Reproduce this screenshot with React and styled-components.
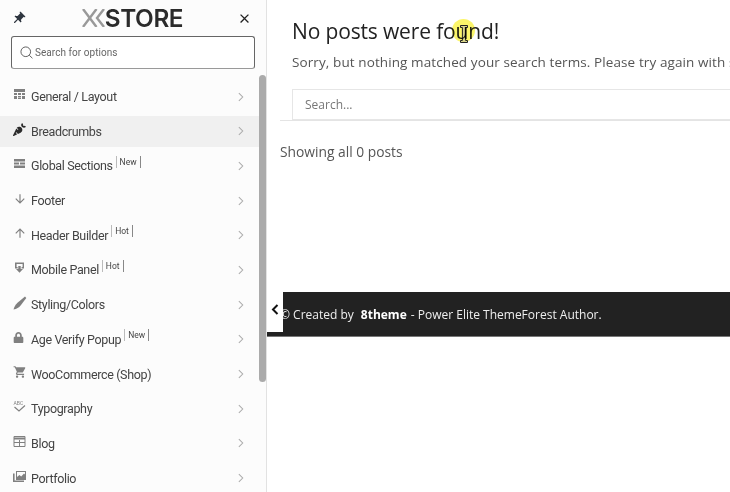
import React from 'react';
import styled, { createGlobalStyle } from 'styled-components';
import { FaCarrot, FaLock } from 'react-icons/fa';
import {
  MdArrowDownward,
  MdArrowUpward,
  MdClose,
  MdPushPin,
  MdShoppingCart,
} from 'react-icons/md';

const GridIcon = () => (
  <svg width="13" height="13" viewBox="0 0 13 13" fill="currentColor">
    <path d="M1 1h11v3H1zM1 5h3v2H1zM5 5h3v2H5zM9 5h3v2H9zM1 8h3v3H1zM5 8h3v1.4H5zM5 10h3v1H5zM9 8h3v3H9z" />
  </svg>
);

const SectionsIcon = () => (
  <svg width="13" height="13" viewBox="0 0 13 13" fill="currentColor">
    <path d="M1 2h11v2.4H1zM1 5.4h5v2.2H1zM7 5.4h5v2.2H7zM1 8.6h11V11H1z" />
  </svg>
);

const MobileIcon = () => (
  <svg width="13" height="13" viewBox="0 0 13 13" fill="currentColor">
    <path d="M2 1.5h9v6H8.6V6h1V3h-6v3h1v1.5H2zM5.3 5h2.4v3H10l-3.5 3.8L3 8h2.3z" />
  </svg>
);

const BrushIcon = () => (
  <svg width="14" height="14" viewBox="0 0 14 14" fill="currentColor">
    <path d="M0.5 13.5c.8-3 2-5 4-6.8L12 .6l1.3 1.3L7.6 9.4c-1.6 2.1-3.9 3.4-7.1 4.1z" />
  </svg>
);

const TypographyIcon = () => (
  <svg width="13" height="13" viewBox="0 0 13 13">
    <text x="0.5" y="4.6" fontSize="5" fontFamily="Roboto, sans-serif" fill="currentColor">
      ABC
    </text>
    <path d="M1.5 7l4.5 4 6-5.5" fill="none" stroke="currentColor" strokeWidth="1.2" />
  </svg>
);

const TableIcon = () => (
  <svg width="13" height="13" viewBox="0 0 13 13" fill="none" stroke="currentColor">
    <path d="M1 1.5h11v10H1z" />
    <path d="M1 3.5h11" strokeWidth="2" />
    <path d="M1 7.5h11M6.5 5v6.5" />
  </svg>
);

const PortfolioIcon = () => (
  <svg width="13" height="13" viewBox="0 0 13 13" fill="currentColor">
    <path d="M3 1h10v9H3zM4 2v5l2.4-2 1.8 1.4L11 3.4l1 1V2z" fillRule="evenodd" />
    <path d="M0 3.4h1.6v7.2H11V12H0z" />
  </svg>
);

const menuItems = [
  { label: 'General / Layout', icon: <GridIcon /> },
  { label: 'Breadcrumbs', icon: <FaCarrot size={13} />, active: true, dark: true },
  { label: 'Global Sections', icon: <SectionsIcon />, tag: 'New' },
  { label: 'Footer', icon: <MdArrowDownward size={14} /> },
  { label: 'Header Builder', icon: <MdArrowUpward size={14} />, tag: 'Hot' },
  { label: 'Mobile Panel', icon: <MobileIcon />, tag: 'Hot' },
  { label: 'Styling/Colors', icon: <BrushIcon /> },
  { label: 'Age Verify Popup', icon: <FaLock size={11} />, tag: 'New' },
  { label: 'WooCommerce (Shop)', icon: <MdShoppingCart size={14} /> },
  { label: 'Typography', icon: <TypographyIcon /> },
  { label: 'Blog', icon: <TableIcon /> },
  { label: 'Portfolio', icon: <PortfolioIcon /> },
];

const App = () => {
  return (
    <>
      <GlobalStyle />
      <Page>
        <Sidebar>
          <Header>
            <PinButton>
              <MdPushPin size={15} />
            </PinButton>
            <Logo>
              <svg width="23" height="18" viewBox="0 0 23 18" fill="none" stroke="#999" strokeWidth="2.4">
                <path d="M1 0l13.5 18M14.5 0L1 18M22 0l-7 9 7 9" />
              </svg>
              <LogoText>STORE</LogoText>
            </Logo>
            <CloseButton>
              <MdClose size={15} />
            </CloseButton>
          </Header>
          <SearchBox>
            <svg width="13" height="13" viewBox="0 0 14 14" fill="none" stroke="#444" strokeWidth="0.9">
              <circle cx="6.2" cy="6.2" r="5.2" />
              <path d="M10 10l3.4 3.2" />
            </svg>
            <SearchText>Search for options</SearchText>
          </SearchBox>
          <Menu>
            {menuItems.map((item) => (
              <MenuRow key={item.label} $active={item.active}>
                <IconSlot $dark={item.dark}>{item.icon}</IconSlot>
                <MenuLabel>{item.label}</MenuLabel>
                {item.tag && <Tag>{item.tag}</Tag>}
                <Arrow viewBox="0 0 7 11">
                  <path d="M1 1l4.5 4.5L1 10" />
                </Arrow>
              </MenuRow>
            ))}
          </Menu>
          <ScrollThumb />
        </Sidebar>
        <Main>
          <Notice>
            <Title>No posts were found!</Title>
            <Message>
              Sorry, but nothing matched your search terms. Please try again with some different keywords.
            </Message>
            <SearchField>Search...</SearchField>
          </Notice>
          <Results>Showing all 0 posts</Results>
          <FooterBar>
            <CollapseTab>
              <svg width="8" height="11" viewBox="0 0 8 11" fill="none" stroke="#111" strokeWidth="2">
                <path d="M6.5 1L2 5.5 6.5 10" />
              </svg>
            </CollapseTab>
            <span>© Created by</span>
            <strong>8theme</strong>
            <span>- Power Elite ThemeForest Author.</span>
          </FooterBar>
          <CursorMark>
            <svg width="8" height="18" viewBox="0 0 8 18" fill="#d8d48a" stroke="#222" strokeWidth="1">
              <path d="M.5.5h7v2H5.6v13h1.9v2h-7v-2h1.9v-13H.5z" />
            </svg>
          </CursorMark>
        </Main>
      </Page>
    </>
  );
};

export default App;

const GlobalStyle = createGlobalStyle`
  html, body {
    margin: 0;
    background: #fff;
  }
`;

const Page = styled.div`
  width: 730px;
  height: 492px;
  display: flex;
  overflow: hidden;
`;

const Sidebar = styled.aside`
  position: relative;
  flex: 0 0 266px;
  height: 492px;
  background: #fcfcfc;
  border-right: 1px solid #e2e2e2;
  font-family: Roboto, sans-serif;
  overflow: hidden;
`;

const Header = styled.div`
  height: 36px;
  display: flex;
  align-items: center;
  justify-content: space-between;
  padding: 0 14px 0 11px;
`;

const PinButton = styled.span`
  display: flex;
  color: #2f3640;
  transform: rotate(45deg);
`;

const CloseButton = styled.span`
  display: flex;
  color: #222;
`;

const Logo = styled.div`
  display: flex;
  align-items: center;
  margin-left: 2px;
`;

const LogoText = styled.span`
  font-family: Inter, sans-serif;
  font-size: 24.3px;
  font-weight: 600;
  line-height: 26px;
  letter-spacing: -0.4px;
  color: #2b2b2b;
`;

const SearchBox = styled.div`
  box-sizing: border-box;
  width: 244px;
  height: 33px;
  margin-left: 11px;
  padding-left: 8px;
  display: flex;
  align-items: center;
  gap: 2px;
  background: #fff;
  border: 1px solid #666;
  border-bottom-color: #999;
  border-radius: 3px;
`;

const SearchText = styled.span`
  font-size: 10px;
  letter-spacing: 0.05px;
  color: #666;
`;

const Menu = styled.div`
  margin-top: 12px;
`;

const MenuRow = styled.div`
  box-sizing: border-box;
  width: 259px;
  height: 31px;
  margin-bottom: 3.7px;
  padding: 0 14px 0 13px;
  display: flex;
  align-items: center;
  background: ${(props) => (props.$active ? '#f0f0f0' : 'transparent')};
`;

const IconSlot = styled.span`
  flex: 0 0 18px;
  height: 14px;
  display: flex;
  align-items: center;
  margin-top: -4px;
  color: ${(props) => (props.$dark ? '#2b2b2b' : '#808080')};
`;

const MenuLabel = styled.span`
  font-size: 12.5px;
  letter-spacing: -0.35px;
  color: #444;
`;

const Tag = styled.span`
  margin: -8px 0 0 3px;
  padding: 0 3px;
  font-size: 8.5px;
  line-height: 12px;
  color: #444;
  border-left: 1px solid #bbb;
  border-right: 1px solid #888;
`;

const Arrow = styled.svg`
  width: 6px;
  height: 10px;
  margin-left: auto;
  margin-right: 1px;
  fill: none;
  stroke: #aaa;
  stroke-width: 1.2;
`;

const ScrollThumb = styled.div`
  position: absolute;
  top: 75px;
  right: 0;
  width: 7px;
  height: 307px;
  border-radius: 4px;
  background: #ababab;
`;

const Main = styled.main`
  position: relative;
  flex: 1;
  min-width: 0;
  font-family: 'Open Sans', sans-serif;
  overflow: hidden;
`;

const Notice = styled.section`
  margin-left: 13px;
  padding: 18px 0 0 12px;
  height: 102px;
  border-bottom: 1px solid #e4e4e4;
`;

const Title = styled.h1`
  margin: 0;
  font-size: 21px;
  font-weight: 400;
  line-height: 26px;
  letter-spacing: -0.15px;
  color: #222;
  white-space: nowrap;
`;

const Message = styled.p`
  margin: 8px 0 0;
  font-size: 13.5px;
  line-height: 20px;
  letter-spacing: 0.1px;
  color: #555;
  white-space: nowrap;
`;

const SearchField = styled.div`
  box-sizing: border-box;
  height: 31px;
  margin-top: 17px;
  padding-left: 12px;
  display: flex;
  align-items: center;
  font-size: 12px;
  color: #777;
  background: #fff;
  border: 1px solid #e6e6e6;
  border-right: 0;
`;

const Results = styled.div`
  height: 171px;
  margin-left: 13px;
  padding-top: 21px;
  box-sizing: border-box;
  font-size: 13.8px;
  line-height: 20px;
  color: #555;
`;

const FooterBar = styled.footer`
  position: relative;
  height: 44px;
  padding-left: 13px;
  display: flex;
  align-items: center;
  gap: 6px;
  font-size: 12px;
  color: #eee;
  background: #222;
  border-bottom: 1px solid #777;
  white-space: nowrap;

  strong {
    margin: 0 -2px 0 1px;
    color: #fff;
    font-weight: 700;
  }
`;

const CollapseTab = styled.span`
  position: absolute;
  left: 0;
  top: 0;
  width: 16px;
  height: 40px;
  padding-bottom: 6px;
  box-sizing: border-box;
  display: flex;
  align-items: center;
  justify-content: center;
  background: #fff;
`;

const CursorMark = styled.div`
  position: absolute;
  left: 185px;
  top: 19px;
  width: 23px;
  height: 23px;
  padding-top: 6px;
  box-sizing: border-box;
  display: flex;
  align-items: center;
  justify-content: center;
  border-radius: 50%;
  background: #fbf56a;
  mix-blend-mode: multiply;
`;
